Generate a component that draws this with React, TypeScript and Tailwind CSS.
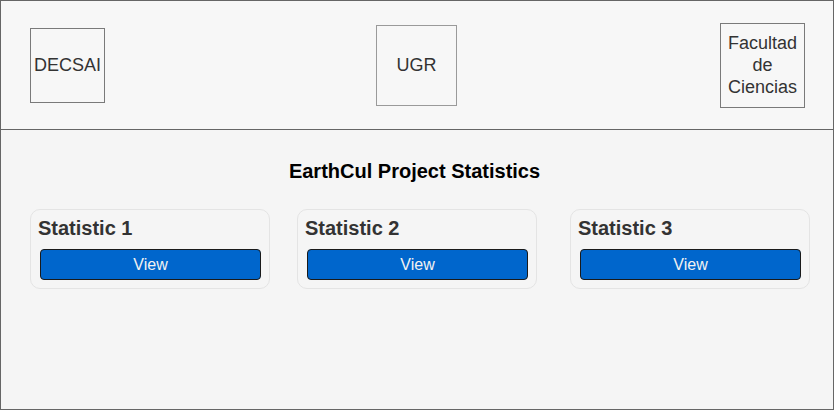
import React from "react";

const font = { fontFamily: '"Liberation Sans", Arial, Helvetica, sans-serif' };

function Card({ title, ml }: { title: string; ml: string }) {
  return (
    <div
      className={`${ml} w-[240px] h-[80px] rounded-[10px] border border-[#e4e4e4] bg-[#f5f5f5] pt-[7px] pl-[7px] pr-[8px] flex flex-col`}
    >
      <div className="text-[20px] leading-[23px] font-bold text-[#333333]">{title}</div>
      <button className="mt-[9px] ml-[2px] w-[221px] h-[31px] rounded-[4px] border border-[#1a1a1a] bg-[#0066cc] text-[16px] leading-[18px] text-[#f2f2f2]">
        View
      </button>
    </div>
  );
}

export default function App() {
  return (
    <div style={font} className="w-[834px] h-[410px] border border-[#666666] bg-[#f5f5f5] flex flex-col">
      <div className="h-[129px] shrink-0 border-b border-[#666666] bg-[#f7f7f7] flex items-center pl-[29px]">
        <div className="w-[75px] h-[75px] border border-[#7a7a7a] flex items-center justify-center text-[18px] text-[#333333]">
          DECSAI
        </div>
        <div className="ml-[271px] w-[81px] h-[81px] border border-[#9a9a9a] flex items-center justify-center text-[18px] text-[#333333]">
          UGR
        </div>
        <div className="ml-[263px] w-[85px] h-[85px] border border-[#7a7a7a] flex items-center justify-center text-center text-[18px] leading-[22px] text-[#333333]">
          Facultad
          <br />
          de
          <br />
          Ciencias
        </div>
      </div>
      <div className="flex flex-col">
        <div className="pt-[31px] h-[52px] text-center text-[20px] leading-[21px] font-bold text-black pr-[5px]">
          EarthCul Project Statistics
        </div>
        <div className="mt-[27px] flex pl-[29px]">
          <Card title="Statistic 1" ml="" />
          <Card title="Statistic 2" ml="ml-[27px]" />
          <Card title="Statistic 3" ml="ml-[33px]" />
        </div>
      </div>
    </div>
  );
}
